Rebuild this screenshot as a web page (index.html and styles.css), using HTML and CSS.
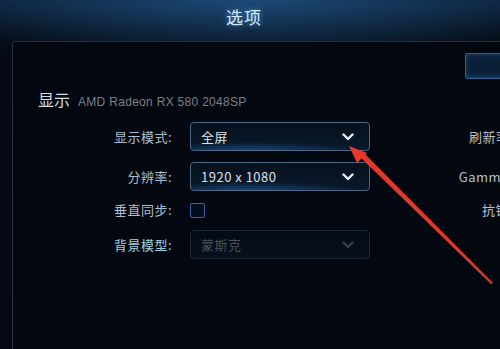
FILE: index.html
```html
<!DOCTYPE html>
<html lang="zh-CN">
<head>
    <meta charset="UTF-8">
    <title>选项</title>
    <link rel="stylesheet" href="styles.css">
</head>
<body>
    <div class="screen">
        <div class="titlebar">
            <h1>选项</h1>
        </div>

        <div class="panel">
            <div class="toolbar">
                <button class="tab-btn"></button>
            </div>

            <div class="section-head">
                <span class="section-name">显示</span>
                <span class="gpu">AMD Radeon RX 580 2048SP</span>
            </div>

            <div class="row row-mode">
                <label class="label">显示模式:</label>
                <div class="select">
                    <span>全屏</span>
                    <svg class="chev" width="12" height="8" viewBox="0 0 12 8"><path d="M1.5 1.5 6 6l4.5-4.5" fill="none" stroke="currentColor" stroke-width="2.4" stroke-linecap="round" stroke-linejoin="round"/></svg>
                </div>
                <label class="label side">刷新率(Hz):</label>
            </div>

            <div class="row row-res">
                <label class="label">分辨率:</label>
                <div class="select">
                    <span>1920 x 1080</span>
                    <svg class="chev" width="12" height="8" viewBox="0 0 12 8"><path d="M1.5 1.5 6 6l4.5-4.5" fill="none" stroke="currentColor" stroke-width="2.4" stroke-linecap="round" stroke-linejoin="round"/></svg>
                </div>
                <label class="label side">Gamma校正:</label>
            </div>

            <div class="row row-vsync">
                <label class="label">垂直同步:</label>
                <div class="check-cell"><span class="check"></span></div>
                <label class="label side">抗锯齿化:</label>
            </div>

            <div class="row">
                <label class="label bright">背景模型:</label>
                <div class="select disabled">
                    <span>蒙斯克</span>
                    <svg class="chev" width="12" height="8" viewBox="0 0 12 8"><path d="M1.5 1.5 6 6l4.5-4.5" fill="none" stroke="currentColor" stroke-width="2.4" stroke-linecap="round" stroke-linejoin="round"/></svg>
                </div>
            </div>
        </div>

        <!-- annotation arrow drawn on top of the screenshot -->
        <svg class="arrow" width="500" height="349" viewBox="0 0 500 349">
            <polygon points="360,157 364,153 493,283 491,284" fill="#e0392e"/>
            <polygon points="349,146 357,163 367,153" fill="#e63a2f"/>
        </svg>
    </div>
</body>
</html>
```

FILE: styles.css
```css
* {
    margin: 0;
    padding: 0;
    box-sizing: border-box;
}
body {
    background-color: #040912;
    font-family: "Noto Sans CJK SC", "Noto Sans", sans-serif;
}
.screen {
    position: relative;
    width: 500px;
    height: 349px;
    overflow: hidden;
    background:
        radial-gradient(ellipse 320px 60px at 250px 0px, rgba(40, 100, 160, 0.6), rgba(10, 30, 60, 0) 100%),
        linear-gradient(180deg, #0c2038 0px, #07121f 30px, #050a14 60px, #040811 100%);
}
.titlebar {
    height: 41px;
    display: flex;
    justify-content: center;
}
.titlebar h1 {
    font-size: 17px;
    font-weight: normal;
    line-height: 20px;
    margin-top: 7px;
    margin-left: -12px;
    color: #d4e8f6;
    letter-spacing: 1px;
    text-shadow: 0 0 6px rgba(90, 170, 240, 0.8);
}
.panel {
    width: 600px;
    height: 308px;
    margin-left: 12px;
    border-top: 1px solid #243042;
    border-left: 1px solid #243042;
    border-top-left-radius: 3px;
    background-color: #03070f;
}
.toolbar {
    display: flex;
    justify-content: flex-end;
    padding-top: 11px;
    padding-right: 47px;
}
.tab-btn {
    width: 100px;
    height: 26px;
    border: 1px solid #2b5f8c;
    border-radius: 2px;
    background: linear-gradient(180deg, #0c2540, #0a1c32 60%, #0d2a48);
    box-shadow: inset 0 0 4px rgba(60, 130, 200, 0.4);
}
.section-head {
    display: flex;
    align-items: baseline;
    gap: 8px;
    padding-left: 25px;
    margin-top: 10px;
    height: 20px;
}
.section-name {
    font-size: 16px;
    color: #d6dee6;
    line-height: 20px;
}
.gpu {
    font-family: "Liberation Sans", sans-serif;
    font-size: 12px;
    color: #77828e;
    letter-spacing: 0.3px;
}
.row {
    display: grid;
    grid-template-columns: 159px 180px 152px;
    column-gap: 18px;
    align-items: center;
    height: 29px;
}
.row-mode {
    margin-top: 13px;
    margin-bottom: 11px;
}
.row-res {
    margin-bottom: 4px;
}
.row-vsync {
    margin-bottom: 6px;
}
.label {
    text-align: right;
    font-size: 13px;
    color: #a9c0d2;
    letter-spacing: 0.5px;
}
.label.bright {
    color: #9fd2e2;
}
.label.side {
    color: #b4c2ce;
    grid-column: 3;
}
.select {
    height: 29px;
    display: flex;
    align-items: center;
    justify-content: space-between;
    padding: 0 15px 0 10px;
    border: 1px solid #4a6784;
    border-radius: 4px;
    background:
        radial-gradient(ellipse 110px 10px at 60px 29px, rgba(40, 120, 200, 0.55), rgba(20, 60, 110, 0) 100%),
        linear-gradient(180deg, #07101c, #091a2c);
    font-size: 13px;
    color: #d8e2ea;
}
.select span {
    letter-spacing: 0.5px;
}
.chev {
    color: #e6eef6;
}
.select.disabled {
    border-color: #1c2836;
    background: linear-gradient(180deg, #050b14, #07101a);
    color: #45505c;
}
.select.disabled .chev {
    color: #36414c;
}
.check-cell {
    display: flex;
    align-items: center;
    padding-top: 1px;
}
.check {
    width: 15px;
    height: 15px;
    border: 1.5px solid #4061a8;
    border-radius: 2px;
    background-color: #060c1c;
}
.arrow {
    position: absolute;
    left: 0;
    top: 0;
}
```
